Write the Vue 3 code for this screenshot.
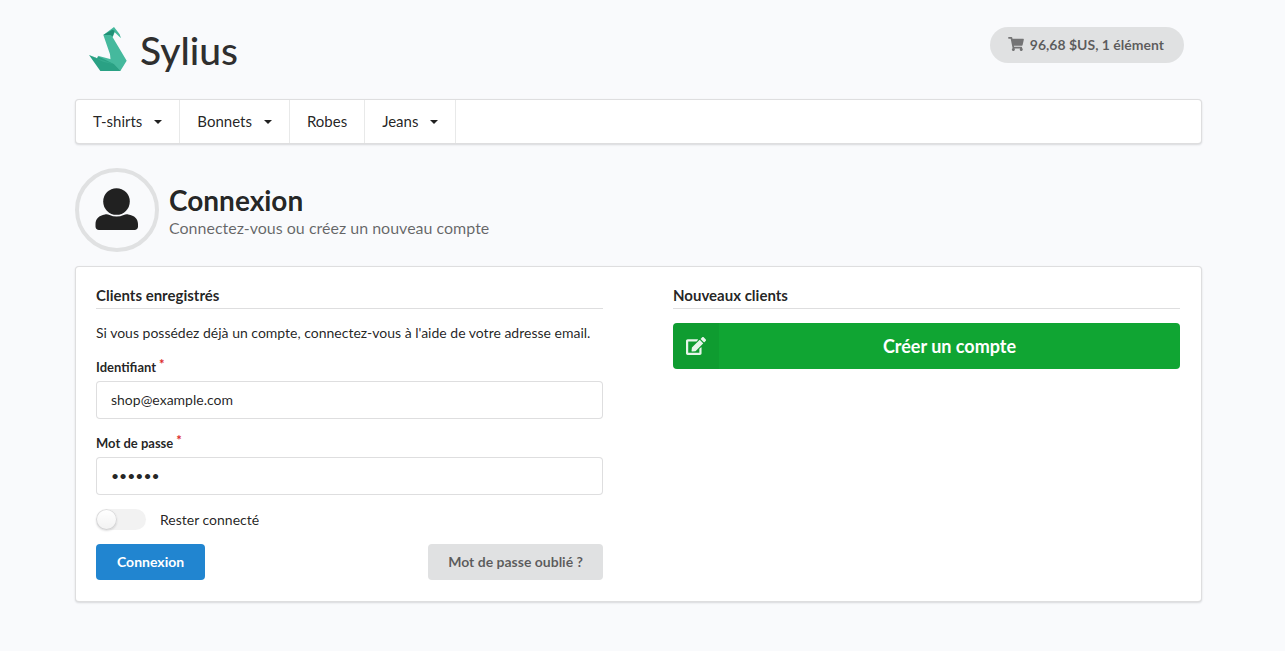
<script setup>
import { ref } from 'vue'

const menu = [
  { label: 'T-shirts', children: true },
  { label: 'Bonnets', children: true },
  { label: 'Robes', children: false },
  { label: 'Jeans', children: true },
]
const email = ref('shop@example.com')
const password = ref('sylius')
const remember = ref(false)
</script>

<template>
  <div class="page">
    <header class="top">
      <a href="#" class="logo" aria-label="Sylius">
        <svg class="swan" viewBox="42 36 114 132" aria-hidden="true">
          <path fill="#45b99d" d="M117 36 85 60 105 118 107 138 136 168 155 137 113 67 119 52 138 70 134 58Z" />
          <path fill="#1f8f75" d="M85 60 112 44 119 47 113 64 106 60Z" />
          <path fill="#45b99d" d="M68 122 108 133 118 148 90 148Z" />
          <path fill="#2aa184" d="M42 120 66 130 69 124 118 148 137 168 76 168Z" />
          <path fill="#36ab8e" d="M42 120 66 130 118 148 84 140Z" />
        </svg>
        <span>Sylius</span>
      </a>
      <button type="button" class="cart">
        <svg viewBox="0 0 576 512" aria-hidden="true"><path fill="currentColor" d="M528.12 301.319l47.273-208C578.806 78.301 567.391 64 551.99 64H159.208l-9.166-44.81C147.758 8.021 137.93 0 126.529 0H24C10.745 0 0 10.745 0 24v16c0 13.255 10.745 24 24 24h69.883l70.248 343.435C147.325 417.1 136 435.222 136 456c0 30.928 25.072 56 56 56s56-25.072 56-56c0-15.674-6.447-29.835-16.824-40h209.647C430.447 426.165 424 440.326 424 456c0 30.928 25.072 56 56 56s56-25.072 56-56c0-22.172-12.888-41.332-31.579-50.405l5.517-24.276c3.413-15.018-8.002-29.319-23.403-29.319H218.117l-6.545-32h293.145c11.206 0 20.92-7.754 23.403-18.681z" /></svg>
        <span>96,68 $US, 1 élément</span>
      </button>
    </header>

    <nav class="menu">
      <a v-for="item in menu" :key="item.label" href="#" class="item">
        {{ item.label }}
        <i v-if="item.children" class="caret"></i>
      </a>
    </nav>

    <div class="heading">
      <div class="avatar">
        <svg viewBox="0 0 42 42" aria-hidden="true">
          <circle cx="20.500" cy="12.500" r="13.300" fill="currentColor" />
          <path fill="currentColor" d="M9 25.400c1.500-.4 3.200-.1 4.500.5 4.600 2 9.600 2 14.200 0 1.300-.6 3-.9 4.500-.5C38.500 26.200 42 30 42 35v2.500c0 2-1.500 3.500-3.500 3.500h-35.500C1 41-.5 39.500-.5 37.500V35c0-5 3.500-8.800 9.500-9.600Z" />
        </svg>
      </div>
      <div>
        <h1>Connexion</h1>
        <p>Connectez-vous ou créez un nouveau compte</p>
      </div>
    </div>

    <main class="segment">
      <form class="column" @submit.prevent>
        <h2>Clients enregistrés</h2>
        <p class="intro">Si vous possédez déjà un compte, connectez-vous à l'aide de votre adresse email.</p>
        <div class="field">
          <label for="email">Identifiant<span class="star">*</span></label>
          <input id="email" v-model="email" type="text" required>
        </div>
        <div class="field">
          <label for="password">Mot de passe<span class="star">*</span></label>
          <input id="password" v-model="password" type="password" required>
        </div>
        <div class="remember">
          <input id="remember" v-model="remember" type="checkbox" class="toggle">
          <label for="remember">Rester connecté</label>
        </div>
        <div class="actions">
          <button type="submit" class="btn primary">Connexion</button>
          <a href="#" class="btn">Mot de passe oublié ?</a>
        </div>
      </form>

      <section class="column">
        <h2>Nouveaux clients</h2>
        <a href="#" class="create">
          <span class="create-icon">
            <svg viewBox="0 0 576 512" aria-hidden="true"><path fill="currentColor" d="M402.600 83.200l90.200 90.200c3.800 3.800 3.800 10 0 13.800L274.400 405.600l-92.800 10.300c-12.400 1.400-22.900-9.100-21.500-21.500l10.300-92.800L388.800 83.200c3.800-3.800 10-3.800 13.800 0zm162-22.900l-48.800-48.800c-15.200-15.200-39.900-15.200-55.200 0l-35.400 35.400c-3.800 3.800-3.800 10 0 13.800l90.200 90.200c3.800 3.800 10 3.800 13.800 0l35.400-35.400c15.200-15.300 15.200-40 0-55.200zM384 346.200V448H64V128h229.800c3.200 0 6.200-1.300 8.500-3.500l40-40c7.600-7.600 2.200-20.500-8.500-20.500H48C21.500 64 0 85.500 0 112v352c0 26.500 21.500 48 48 48h352c26.500 0 48-21.500 48-48V306.200c0-10.700-12.900-16-20.500-8.500l-40 40c-2.200 2.300-3.500 5.300-3.500 8.500z" /></svg>
          </span>
          <span class="create-text">Créer un compte</span>
        </a>
      </section>
    </main>
  </div>
</template>

<style>
body {
  background: #f9fafc;
}
</style>

<style scoped>
.page,
.page * {
  box-sizing: border-box;
}
.page {
  padding: 26px 83px 48px 75px;
  font-family: Lato, "Liberation Sans", sans-serif;
  font-size: 14px;
  line-height: 20px;
  color: rgba(0, 0, 0, 0.87);
}
a {
  color: inherit;
  text-decoration: none;
}
h1,
h2,
p {
  margin: 0;
}
button,
input {
  font-family: inherit;
}
.top {
  display: flex;
  justify-content: space-between;
  align-items: flex-start;
  padding: 1px 18px 0 14px;
}
.logo {
  display: flex;
  gap: 13px;
  height: 72px;
  color: #2f2f2f;
  font-size: 39px;
  line-height: 46px;
  font-weight: 500;
}
.swan {
  width: 38px;
  height: 44px;
}
.cart {
  display: flex;
  align-items: center;
  gap: 6px;
  height: 36px;
  padding: 0 20px 2px 18px;
  border: 0;
  border-radius: 18px;
  background: #e0e1e2;
  color: rgba(0, 0, 0, 0.6);
  font-size: 14px;
  font-weight: 700;
}
.cart svg {
  width: 16px;
  height: 14px;
  opacity: 0.8;
}
.menu {
  display: flex;
  height: 45px;
  background: #fff;
  border: 1px solid rgba(34, 36, 38, 0.15);
  border-radius: 4px;
  box-shadow: 0 1px 2px 0 rgba(34, 36, 38, 0.15);
  font-size: 15px;
}
.item {
  display: flex;
  align-items: center;
  gap: 12px;
  padding: 0 17px 2px;
  border-right: 1px solid rgba(34, 36, 38, 0.1);
}
.caret {
  margin-top: 2px;
  border: 4px solid transparent;
  border-top-color: currentColor;
  border-bottom: 0;
}
.heading {
  display: flex;
  align-items: center;
  gap: 10px;
  margin: 24px 0 14px;
}
.avatar {
  display: flex;
  align-items: center;
  justify-content: center;
  width: 84px;
  height: 84px;
  border: 4px solid #e0e1e2;
  border-radius: 50%;
}
.avatar svg {
  width: 42px;
  height: 42px;
  overflow: visible;
}
h1 {
  padding: 2px 0 1px;
  font-size: 28px;
  line-height: 32px;
}
.heading p {
  font-size: 16px;
  line-height: 22px;
  color: rgba(0, 0, 0, 0.6);
}
.segment {
  display: grid;
  grid-template-columns: 1fr 1fr;
  gap: 70px;
  padding: 19px 21px 21px 20px;
  background: #fff;
  border: 1px solid rgba(34, 36, 38, 0.15);
  border-radius: 4px;
  box-shadow: 0 1px 2px 0 rgba(34, 36, 38, 0.15);
}
h2 {
  padding-bottom: 4px;
  margin-bottom: 14px;
  border-bottom: 1px solid rgba(34, 36, 38, 0.15);
  font-size: 15px;
  line-height: 18px;
}
.intro {
  margin-bottom: 14px;
}
.field {
  margin-bottom: 14px;
}
.field label {
  display: block;
  margin-bottom: 4px;
  font-size: 13px;
  line-height: 20px;
  font-weight: 700;
}
.star {
  margin-left: 3px;
  color: #db2828;
  vertical-align: top;
  line-height: 14px;
}
.field input {
  display: block;
  width: 100%;
  height: 38px;
  padding: 0 14px 2px;
  border: 1px solid rgba(34, 36, 38, 0.15);
  border-radius: 4px;
  background: #fff;
  color: rgba(0, 0, 0, 0.87);
  font-size: 14px;
  outline: 0;
}
.remember {
  display: flex;
  align-items: center;
  gap: 14px;
  margin-bottom: 14px;
}
.toggle {
  appearance: none;
  display: flex;
  width: 50px;
  height: 21px;
  margin: 0;
  border-radius: 11px;
  background: #f2f2f2;
}
.toggle::before {
  content: "";
  width: 21px;
  height: 21px;
  border-radius: 50%;
  background: #fff linear-gradient(transparent, rgba(0, 0, 0, 0.05));
  box-shadow: 0 1px 2px 0 rgba(34, 36, 38, 0.15), 0 0 0 1px rgba(34, 36, 38, 0.15) inset;
}
.toggle:checked {
  justify-content: flex-end;
  background: #2185d0;
}
.actions {
  display: flex;
  justify-content: space-between;
}
.btn {
  height: 36px;
  padding: 0 20px;
  border: 0;
  border-radius: 4px;
  background: #e0e1e2;
  color: rgba(0, 0, 0, 0.6);
  font-size: 14px;
  line-height: 36px;
  font-weight: 700;
}
.primary {
  padding: 0 21px;
  background: #2185d0;
  color: #fff;
}
.create {
  display: flex;
  height: 46px;
  border-radius: 4px;
  overflow: hidden;
  background: #10a533;
  color: #fff;
  font-size: 18px;
  font-weight: 700;
  line-height: 46px;
}
.create-icon {
  display: flex;
  align-items: center;
  justify-content: center;
  width: 46px;
  background: rgba(0, 0, 0, 0.05);
}
.create-icon svg {
  width: 20px;
  height: 18px;
  opacity: 0.9;
}
.create-text {
  flex: 1;
  text-align: center;
}
</style>
